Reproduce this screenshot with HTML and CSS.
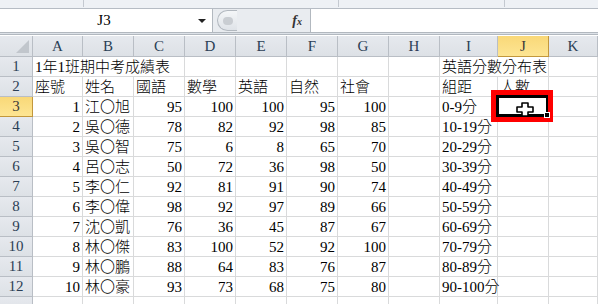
FILE: index.html
```html
<!DOCTYPE html>
<html lang="zh-Hant">
<head>
    <meta charset="UTF-8">
    <title>成績表</title>
    <link rel="stylesheet" href="styles.css">
</head>
<body>
    <div class="ribbon-edge">
        <span class="sep s1"></span>
        <span class="sep s2"></span>
        <span class="sep s3"></span>
    </div>

    <div class="formula-bar">
        <div class="name-box">
            <span class="name">J3</span>
            <span class="arrow"></span>
        </div>
        <div class="grip">
            <span class="knob"></span>
            <span class="fx">f<sub>x</sub></span>
        </div>
        <div class="formula-input"></div>
    </div>

    <div class="sheet">
        <!-- column headers -->
        <div class="hd corner"><span class="tri"></span></div>
        <div class="hd">A</div>
        <div class="hd">B</div>
        <div class="hd">C</div>
        <div class="hd">D</div>
        <div class="hd">E</div>
        <div class="hd">F</div>
        <div class="hd">G</div>
        <div class="hd">H</div>
        <div class="hd">I</div>
        <div class="hd active">J</div>
        <div class="hd">K</div>

        <!-- row 1 -->
        <div class="rh">1</div>
        <div class="c span3">1年1班期中考成績表</div>
        <div class="c"></div><div class="c"></div><div class="c"></div><div class="c"></div><div class="c"></div>
        <div class="c span2">英語分數分布表</div>
        <div class="c"></div>

        <!-- row 2 -->
        <div class="rh">2</div>
        <div class="c">座號</div>
        <div class="c">姓名</div>
        <div class="c">國語</div>
        <div class="c">數學</div>
        <div class="c">英語</div>
        <div class="c">自然</div>
        <div class="c">社會</div>
        <div class="c"></div>
        <div class="c">組距</div>
        <div class="c">人數</div>
        <div class="c"></div>

        <div class="rh active">3</div>
        <div class="c n">1</div><div class="c">江〇旭</div><div class="c n">95</div><div class="c n">100</div><div class="c n">100</div><div class="c n">95</div><div class="c n">100</div><div class="c"></div><div class="c">0-9分</div><div class="c"></div><div class="c"></div>

        <div class="rh">4</div>
        <div class="c n">2</div><div class="c">吳〇德</div><div class="c n">78</div><div class="c n">82</div><div class="c n">92</div><div class="c n">98</div><div class="c n">85</div><div class="c"></div><div class="c">10-19分</div><div class="c"></div><div class="c"></div>

        <div class="rh">5</div>
        <div class="c n">3</div><div class="c">吳〇智</div><div class="c n">75</div><div class="c n">6</div><div class="c n">8</div><div class="c n">65</div><div class="c n">70</div><div class="c"></div><div class="c">20-29分</div><div class="c"></div><div class="c"></div>

        <div class="rh">6</div>
        <div class="c n">4</div><div class="c">呂〇志</div><div class="c n">50</div><div class="c n">72</div><div class="c n">36</div><div class="c n">98</div><div class="c n">50</div><div class="c"></div><div class="c">30-39分</div><div class="c"></div><div class="c"></div>

        <div class="rh">7</div>
        <div class="c n">5</div><div class="c">李〇仁</div><div class="c n">92</div><div class="c n">81</div><div class="c n">91</div><div class="c n">90</div><div class="c n">74</div><div class="c"></div><div class="c">40-49分</div><div class="c"></div><div class="c"></div>

        <div class="rh">8</div>
        <div class="c n">6</div><div class="c">李〇偉</div><div class="c n">98</div><div class="c n">92</div><div class="c n">97</div><div class="c n">89</div><div class="c n">66</div><div class="c"></div><div class="c">50-59分</div><div class="c"></div><div class="c"></div>

        <div class="rh">9</div>
        <div class="c n">7</div><div class="c">沈〇凱</div><div class="c n">76</div><div class="c n">36</div><div class="c n">45</div><div class="c n">87</div><div class="c n">67</div><div class="c"></div><div class="c">60-69分</div><div class="c"></div><div class="c"></div>

        <div class="rh">10</div>
        <div class="c n">8</div><div class="c">林〇傑</div><div class="c n">83</div><div class="c n">100</div><div class="c n">52</div><div class="c n">92</div><div class="c n">100</div><div class="c"></div><div class="c">70-79分</div><div class="c"></div><div class="c"></div>

        <div class="rh">11</div>
        <div class="c n">9</div><div class="c">林〇鵬</div><div class="c n">88</div><div class="c n">64</div><div class="c n">83</div><div class="c n">76</div><div class="c n">87</div><div class="c"></div><div class="c">80-89分</div><div class="c"></div><div class="c"></div>

        <div class="rh">12</div>
        <div class="c n">10</div><div class="c">林〇豪</div><div class="c n">93</div><div class="c n">73</div><div class="c n">68</div><div class="c n">75</div><div class="c n">80</div><div class="c"></div><div class="c">90-100分</div><div class="c"></div><div class="c"></div>

        <div class="rh"></div>
        <div class="c"></div><div class="c"></div><div class="c"></div><div class="c"></div><div class="c"></div><div class="c"></div><div class="c"></div><div class="c"></div><div class="c"></div><div class="c"></div><div class="c"></div>

        <!-- selected cell J3 with the red annotation box -->
        <div class="mark">
            <div class="selection">
                <span class="handle"></span>
            </div>
            <svg class="cursor" width="18" height="15" viewBox="0 0 18 15">
                <polygon points="6,1 12,1 12,5 17,5 17,10 12,10 12,14 6,14 6,10 1,10 1,5 6,5" fill="#fff" stroke="#000" stroke-width="1.6" stroke-linejoin="round"/>
            </svg>
        </div>
    </div>
</body>
</html>
```

FILE: styles.css
```css
body {
    margin: 0;
    width: 598px;
    height: 304px;
    overflow: hidden;
    background: #fff;
    font-family: "Liberation Serif", "Noto Sans CJK TC", serif;
}

.ribbon-edge {
    position: relative;
    height: 8px;
    background: #eef1f5;
    border-bottom: 1px solid #b6bcc4;
}

.sep {
    position: absolute;
    top: 0;
    width: 1px;
    height: 7px;
    background: #c4c9d0;
}
.s1 { left: 83px; }
.s2 { left: 338px; }
.s3 { left: 504px; }

.formula-bar {
    display: flex;
    height: 23px;
    background: #dde2e8;
    border-bottom: 3px double #b2b8bf;
}

.name-box {
    width: 212px;
    display: flex;
    align-items: center;
    background: #fff;
    border-right: 1px solid #b2b8bf;
}

.name {
    flex: 1;
    padding-left: 10px;
    text-align: center;
    font-size: 15px;
    color: #000;
}

.arrow {
    width: 0;
    height: 0;
    margin-right: 6px;
    border-left: 4px solid transparent;
    border-right: 4px solid transparent;
    border-top: 4px solid #222;
}

.grip {
    position: relative;
    width: 97px;
    display: flex;
    align-items: center;
    justify-content: flex-end;
    background: #e9ecf0;
}

.knob {
    position: absolute;
    left: 4px;
    top: 1px;
    width: 19px;
    height: 19px;
    border: 1px solid #b2b8bf;
    border-right: none;
    border-radius: 12px 0 0 12px;
    background: linear-gradient(#f4f6f8, #dfe3e8);
}
.knob::after {
    content: "";
    position: absolute;
    left: 5px;
    top: 6px;
    width: 10px;
    height: 8px;
    border-radius: 5px;
    background: #c9cdd2;
}

.fx {
    margin-right: 8px;
    font-style: italic;
    font-weight: bold;
    font-size: 14px;
    color: #333;
}
.fx sub {
    font-size: 10px;
    vertical-align: 0;
}

.formula-input {
    flex: 1;
    background: #fff;
    border-left: 1px solid #b2b8bf;
}

.sheet {
    position: relative;
    display: grid;
    grid-template-columns: 33px 50px 51px 51px 51px 51px 51px 51px 51px 58px 51px 1fr;
    grid-template-rows: 21px repeat(13, 20px);
    margin-top: 1px;
}

.hd,
.rh {
    display: flex;
    align-items: center;
    justify-content: center;
    background: linear-gradient(#e6e9ee, #dde1e6);
    border-right: 1px solid #b9bec5;
    border-bottom: 1px solid #b9bec5;
    font-size: 15px;
    color: #2b3e55;
}

.hd.active,
.rh.active {
    background: linear-gradient(#f9d878, #fde593);
    border-color: #c2973c;
    color: #3a3a3a;
}

.corner {
    position: relative;
}
.tri {
    position: absolute;
    right: 3px;
    bottom: 3px;
    width: 0;
    height: 0;
    border-left: 13px solid transparent;
    border-bottom: 13px solid #c1c6cc;
}

.c {
    border-right: 1px solid #d9dadb;
    border-bottom: 1px solid #d9dadb;
    padding: 0 2px;
    font-size: 15px;
    font-weight: 300;
    line-height: 20px;
    white-space: nowrap;
    color: #000;
}

.c.n {
    text-align: right;
    font-weight: 400;
}

.span3 { grid-column: span 3; }
.span2 { grid-column: span 2; }

.mark {
    position: absolute;
    left: 491px;
    top: 54px;
    width: 52px;
    height: 22px;
    border: 5px solid #ff0000;
}

.selection {
    position: absolute;
    left: 0;
    top: 0;
    width: 47px;
    height: 16px;
    border: 3px solid #000;
    border-right-width: 2px;
}

.handle {
    position: absolute;
    right: -4px;
    bottom: -4px;
    width: 4px;
    height: 4px;
    background: #000;
    border: 1px solid #fff;
}

.cursor {
    position: absolute;
    left: 20px;
    top: 7px;
}
```
